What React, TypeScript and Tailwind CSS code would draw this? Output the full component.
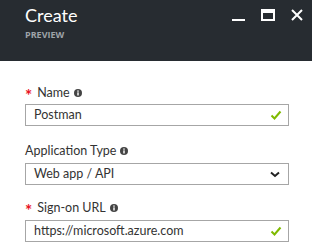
import React from "react";

function Info() {
  return (
    <svg width="8" height="8" viewBox="0 0 10 10" className="ml-[4px] inline-block">
      <circle cx="5" cy="5" r="5" fill="#444" />
      <rect x="4.1" y="4.2" width="1.8" height="3.9" fill="#fff" />
      <rect x="4.1" y="1.8" width="1.8" height="1.6" fill="#fff" />
    </svg>
  );
}

function Check() {
  return (
    <svg width="12" height="10" viewBox="0 0 12 10" className="absolute right-[6px] top-[5px]">
      <path d="M1.5 5.5 L4.5 8.5 L10.5 1.5" fill="none" stroke="#7fba00" strokeWidth="2" />
    </svg>
  );
}

function Label({ text, required }: { text: string; required?: boolean }) {
  return (
    <div className="flex items-center h-[16px] text-[12.5px] text-[#333]">
      {required && <span className="text-[#e81123] mr-[5px] text-[17px] font-bold leading-none mt-[5px]">*</span>}
      <span>{text}</span>
      <Info />
    </div>
  );
}

function Field({ value, check }: { value: string; check?: boolean }) {
  return (
    <div className="relative h-[22px] border border-[#a6a6a6] pl-[8px] flex items-center text-[12.5px] text-[#333]">
      {value}
      {check && <Check />}
    </div>
  );
}

export default function App() {
  return (
    <div className="w-[312px] h-[251px] bg-white overflow-hidden" style={{ fontFamily: 'Lato, sans-serif' }}>
      {/* header */}
      <div className="h-[61px] bg-[#272c31] relative px-[25px] pt-[3px]">
        <div className="text-white text-[18px] leading-[24px]">Create</div>
        <div className="text-[#9ea3a8] text-[9px] font-bold leading-[12px] mt-[2px]" style={{ fontFamily: '"Open Sans", sans-serif' }}>PREVIEW</div>
        <div className="absolute top-[9px] right-[9px] flex items-end gap-[16px]">
          <div className="w-[13px] h-[12px] flex items-end"><div className="w-[13px] h-[2px] bg-white" /></div>
          <div className="w-[14px] h-[12px] border-2 border-white border-t-[4px]" />
          <svg width="12" height="12" viewBox="0 0 12 12">
            <path d="M1 1 L11 11 M11 1 L1 11" stroke="#fff" strokeWidth="2" />
          </svg>
        </div>
      </div>

      {/* form */}
      <div className="pl-[25px] pr-[23px] pt-[24px]">
        <Label text="Name" required />
        <div className="mt-[3px]"><Field value="Postman" check /></div>

        <div className="mt-[17px]"><Label text="Application Type" /></div>
        <div className="mt-[4px] relative h-[22px] border border-[#a6a6a6] pl-[8px] flex items-center text-[12.5px] text-[#333]">
          Web app / API
          <svg width="10" height="7" viewBox="0 0 10 7" className="absolute right-[8px] top-[7px]">
            <path d="M1 1.5 L5 5 L9 1.5" fill="none" stroke="#222" strokeWidth="2" />
          </svg>
        </div>

        <div className="mt-[15px]"><Label text="Sign-on URL" required /></div>
        <div className="mt-[4px]"><Field value="https://microsoft.azure.com" check /></div>
      </div>
    </div>
  );
}
